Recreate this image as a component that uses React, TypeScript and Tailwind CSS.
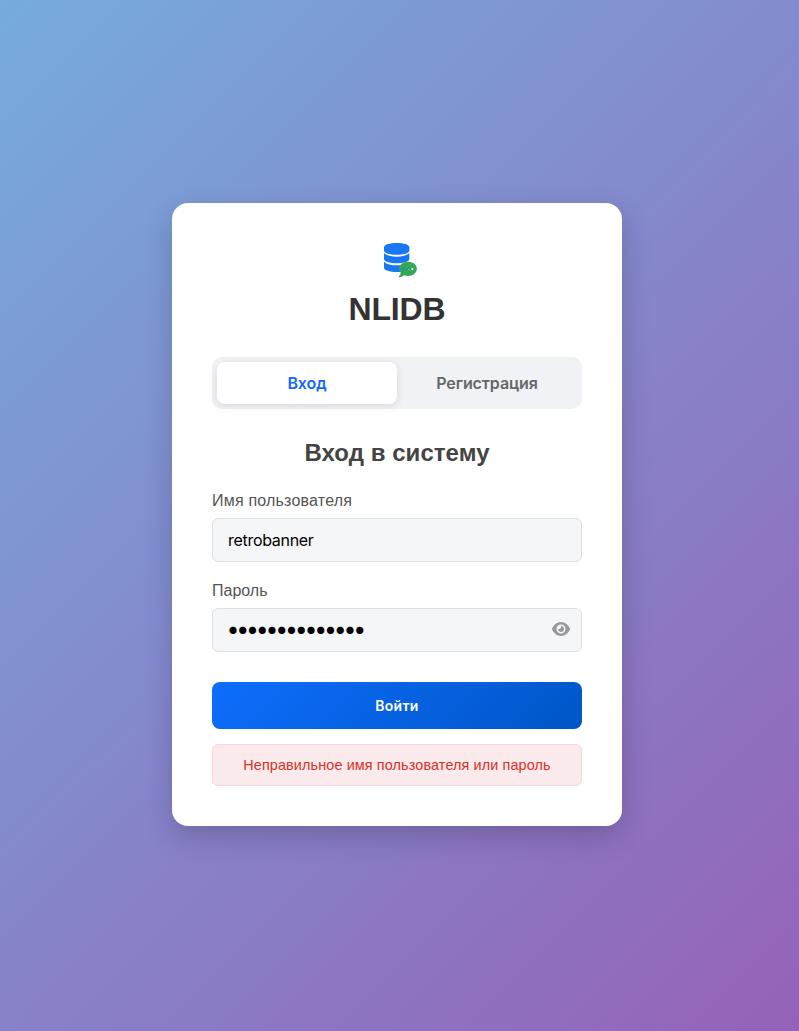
import { useState } from 'react';
import { FaEye } from 'react-icons/fa6';

const label = "block h-[18px] text-[16px] leading-[18px] text-[#555555]";
const field = "block h-11 w-full rounded-md border border-[#dddfe2] bg-[#f5f6f7] font-['Inter',sans-serif] text-black outline-none";

function Logo() {
  return (
    <svg viewBox="0 0 102 105" className="ml-[8px] h-[35px] w-[34px]" aria-hidden="true">
      <g fill="#1877f2">
        <path d="M0 12C0 5 17 0 38 0S76 5 76 12V23C76 30 59 35 38 35S0 30 0 23Z" />
        <path d="M0 30C8 38 22 41 38 41S68 38 76 30V49C76 56 59 61 38 61S0 56 0 49Z" />
        <path d="M0 56C8 64 22 67 38 67S68 64 76 56V75C76 82 59 87 38 87S0 82 0 75Z" />
      </g>
      <path
        fill="#34a853"
        fillRule="evenodd"
        d="M72 56C87 56 98.500 65 98.500 77.500S87 99 72 99C68 99 64 98.200 60.500 97C56 100.500 51 103 45 103C43.500 103 44 101 45 100C48 97 50 93 50 89C47 86 45.500 82 45.500 77.500C45.500 65 57 56 72 56ZM58 75a3.300 3.300 0 1 0 0 6.600a3.300 3.300 0 1 0 0-6.600ZM71.500 75a3.300 3.300 0 1 0 0 6.600a3.300 3.300 0 1 0 0-6.600ZM85 75a3.300 3.300 0 1 0 0 6.600a3.300 3.300 0 1 0 0-6.600Z"
      />
    </svg>
  );
}

export default function App() {
  const [name, setName] = useState('retrobanner');
  const [password, setPassword] = useState('12345678901234');

  return (
    <div className="flex h-screen justify-center bg-[linear-gradient(135deg,#76abdf_0%,#9562ba_100%)] pr-[5px] pt-[203px] font-['Liberation_Sans',sans-serif]">
      <main className="h-[623px] w-[450px] rounded-2xl bg-white px-10 pt-[39.5px] shadow-[0_10px_30px_rgba(0,0,0,0.2)]">
        <header className="flex flex-col items-center">
          <Logo />
          <h1 className="mt-[12.5px] text-[32px] font-bold leading-[38px] tracking-[-0.2px] text-[#333333]">NLIDB</h1>
        </header>

        <div className="mt-[29px] flex h-[52px] rounded-[10px] bg-[#f0f2f5] p-[5px] font-['Inter',sans-serif] text-[16px] font-semibold tracking-[-0.08px]">
          <button className="flex-1 rounded-lg bg-white text-[#1569f5] shadow-[0_2px_8px_rgba(0,0,0,0.1)]">Вход</button>
          <button className="flex-1 text-[#65676b]">Регистрация</button>
        </div>

        <h2 className="mt-[30px] text-center text-[24px] font-bold leading-[28px] tracking-[0.05px] text-[#444444]">Вход в систему</h2>

        <form className="mt-[25px]" onSubmit={(e) => e.preventDefault()}>
          <label htmlFor="name" className={`${label} tracking-[0.2px]`}>Имя пользователя</label>
          <input id="name" value={name} onChange={(e) => setName(e.target.value)} className={`mt-2 px-[15px] text-[16px] tracking-[-0.3px] ${field}`} />
          <label htmlFor="password" className={`mt-5 ${label}`}>Пароль</label>
          <div className="relative mt-2">
            <input id="password" type="password" value={password} onChange={(e) => setPassword(e.target.value)} className={`pb-[2px] pl-[13.5px] pr-10 text-[23px] tracking-[-3.18px] ${field}`} />
            <FaEye className="absolute right-[12px] top-[13px] h-4 w-[18px] text-[#999999]" />
          </div>
          <button className="mt-[30px] block h-[47px] w-full rounded-lg bg-[linear-gradient(135deg,#0d6efd,#0056c7)] font-['Inter',sans-serif] text-[14px] font-semibold tracking-[0.3px] text-white">Войти</button>
        </form>
        <p className="mt-[15px] flex h-[42px] items-center justify-center rounded-md border border-[#f8d7da] bg-[#fbeaec] pt-px text-[14.4px] tracking-[0.125px] text-[#d93025]">Неправильное имя пользователя или пароль</p>
      </main>
    </div>
  );
}
